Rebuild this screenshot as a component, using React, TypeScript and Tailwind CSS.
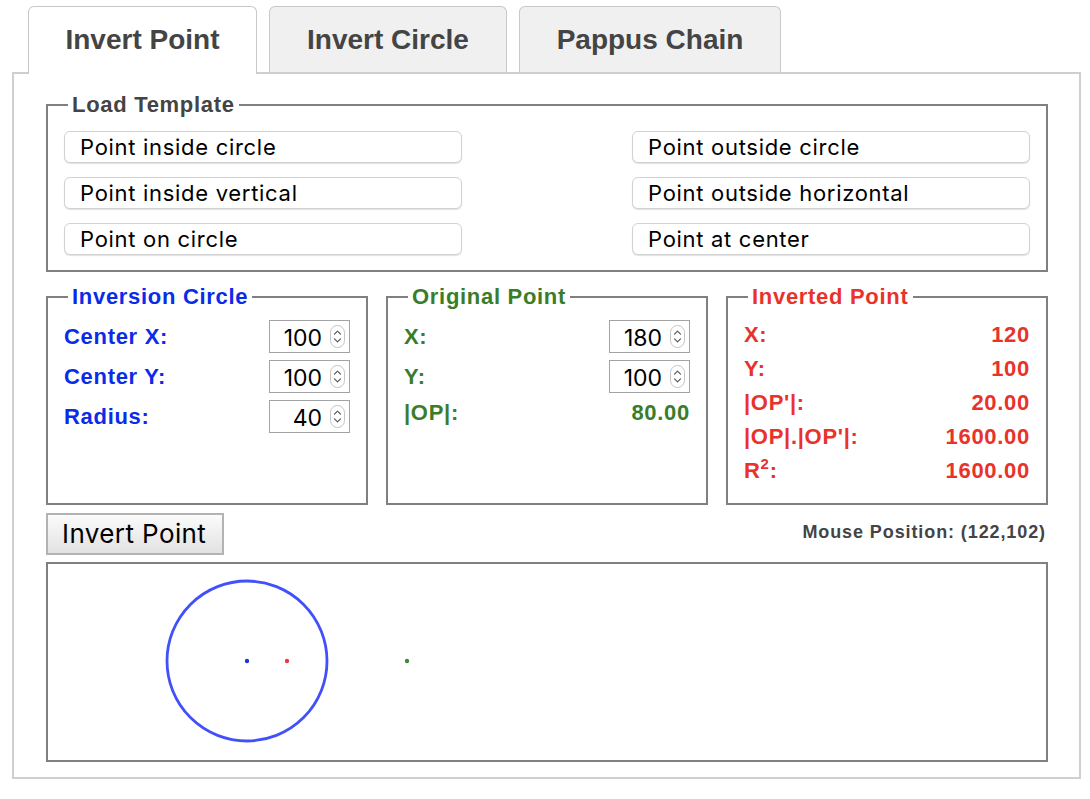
import React from "react";

const Spinner = () => (
  <svg width="15" height="23" viewBox="0 0 15 23" className="shrink-0">
    <rect x="0.5" y="0.5" width="14" height="22" rx="7" fill="#ffffff" stroke="#c4c4c4" />
    <path d="M4.5 9.2 L7.5 6.2 L10.5 9.2" stroke="#5a5a5a" strokeWidth="1.2" fill="none" strokeLinecap="round" strokeLinejoin="round" />
    <path d="M4.5 13.8 L7.5 16.8 L10.5 13.8" stroke="#5a5a5a" strokeWidth="1.2" fill="none" strokeLinecap="round" strokeLinejoin="round" />
  </svg>
);

const NumInput = ({ value }: { value: string }) => (
  <div className="w-[81px] h-[33px] border border-[#a3a3a3] bg-white flex items-center justify-end gap-[8px] pr-[4px] font-['Inter',sans-serif] font-normal tracking-normal text-[23px] text-black leading-none">
    <span className="pt-[3px]">{value}</span>
    <Spinner />
  </div>
);

const TemplateBtn = ({ label }: { label: string }) => (
  <button className="h-[32px] w-[398px] border border-[#d2d2d2] rounded-[6px] bg-white text-left pl-[15px] font-['Inter',sans-serif] text-[22px] tracking-[0.7px] text-black leading-none shadow-[0_1px_1px_rgba(0,0,0,0.12)]">
    {label}
  </button>
);

export default function App() {
  return (
    <div className="w-[1090px] h-[799px] bg-white pt-[6px] pl-[12px] font-['Liberation_Sans',Arial,sans-serif]">
      <div className="w-[1069px]">
        {/* Tabs */}
        <div className="flex items-start gap-[12px] pl-[16px] -mb-[2px] relative z-10">
          <div className="w-[229px] h-[68px] bg-white border border-b-0 border-[#c8c8c8] rounded-t-[6px] flex items-center justify-center pb-[2px] text-[28px] font-bold text-[#444444]">
            Invert Point
          </div>
          <div className="w-[238px] h-[66px] bg-[#f0f0f0] border border-b-0 border-[#c8c8c8] rounded-t-[6px] flex items-center justify-center pt-[1px] text-[28px] font-bold text-[#444444]">
            Invert Circle
          </div>
          <div className="w-[262px] h-[66px] bg-[#f0f0f0] border border-b-0 border-[#c8c8c8] rounded-t-[6px] flex items-center justify-center pt-[1px] text-[28px] font-bold text-[#444444]">
            Pappus Chain
          </div>
        </div>

        {/* Panel */}
        <div className="h-[707px] border-2 border-[#cfcfcf] pl-[32px] pt-[18px]">
          <div className="w-[1002px] flex flex-col">
            {/* Load Template */}
            <fieldset className="h-[180px] border-2 border-[#808080]">
              <legend className="ml-[20px] px-[4px] leading-[25px] text-[22px] font-bold tracking-[0.7px] text-[#444444]">
                Load Template
              </legend>
              <div className="grid grid-cols-[398px_398px] justify-between gap-y-[14px] px-[16px] pt-[14px]">
                <TemplateBtn label="Point inside circle" />
                <TemplateBtn label="Point outside circle" />
                <TemplateBtn label="Point inside vertical" />
                <TemplateBtn label="Point outside horizontal" />
                <TemplateBtn label="Point on circle" />
                <TemplateBtn label="Point at center" />
              </div>
            </fieldset>

            {/* Three boxes */}
            <div className="grid grid-cols-3 gap-[18px] mt-[12px]">
              <fieldset className="h-[221px] border-2 border-[#808080] text-[#0a2be8]">
                <legend className="ml-[20px] px-[4px] leading-[25px] text-[22px] font-bold tracking-[0.7px]">
                  Inversion Circle
                </legend>
                <div className="flex flex-col gap-[7px] px-[16px] pt-[11px] text-[22px] font-bold tracking-[0.7px] leading-[25px]">
                  <div className="flex items-center justify-between">
                    <span>Center X:</span>
                    <NumInput value="100" />
                  </div>
                  <div className="flex items-center justify-between">
                    <span>Center Y:</span>
                    <NumInput value="100" />
                  </div>
                  <div className="flex items-center justify-between">
                    <span>Radius:</span>
                    <NumInput value="40" />
                  </div>
                </div>
              </fieldset>

              <fieldset className="h-[221px] border-2 border-[#808080] text-[#3a7d28]">
                <legend className="ml-[20px] px-[4px] leading-[25px] text-[22px] font-bold tracking-[0.7px]">
                  Original Point
                </legend>
                <div className="flex flex-col gap-[7px] px-[16px] pt-[11px] text-[22px] font-bold tracking-[0.7px] leading-[25px]">
                  <div className="flex items-center justify-between">
                    <span>X:</span>
                    <NumInput value="180" />
                  </div>
                  <div className="flex items-center justify-between">
                    <span>Y:</span>
                    <NumInput value="100" />
                  </div>
                  <div className="flex items-center justify-between">
                    <span>|OP|:</span>
                    <span>80.00</span>
                  </div>
                </div>
              </fieldset>

              <fieldset className="h-[221px] border-2 border-[#808080] text-[#e8322a]">
                <legend className="ml-[20px] px-[4px] leading-[25px] text-[22px] font-bold tracking-[0.7px]">
                  Inverted Point
                </legend>
                <div className="flex flex-col px-[16px] pt-[9px] text-[22px] font-bold tracking-[0.7px] leading-[34px]">
                  <div className="flex justify-between">
                    <span>X:</span>
                    <span>120</span>
                  </div>
                  <div className="flex justify-between">
                    <span>Y:</span>
                    <span>100</span>
                  </div>
                  <div className="flex justify-between">
                    <span>|OP'|:</span>
                    <span>20.00</span>
                  </div>
                  <div className="flex justify-between">
                    <span>|OP|.|OP'|:</span>
                    <span>1600.00</span>
                  </div>
                  <div className="flex justify-between">
                    <span>
                      R<sup className="text-[15px] relative -top-[9px] align-baseline">2</sup>:
                    </span>
                    <span>1600.00</span>
                  </div>
                </div>
              </fieldset>
            </div>

            {/* Button row */}
            <div className="flex items-center justify-between mt-[8px]">
              <button className="w-[178px] h-[42px] border-2 border-[#b3b3b3] bg-gradient-to-b from-[#fbfbfb] to-[#e2e2e2] text-left pl-[14px] font-['Inter',sans-serif] text-[26px] tracking-[0.4px] text-black leading-none">
                Invert Point
              </button>
              <span className="pr-[2px] pb-[4px] text-[18px] font-bold tracking-[0.9px] text-[#444444]">
                Mouse Position: (122,102)
              </span>
            </div>

            {/* Canvas */}
            <div className="mt-[7px] h-[200px] border-2 border-[#808080] bg-white">
              <svg width="998" height="196" viewBox="0 0 998 196">
                <circle cx="199" cy="97" r="80" fill="none" stroke="#4150fa" strokeWidth="2.8" />
                <circle cx="199" cy="97" r="2.2" fill="#2233ee" />
                <circle cx="239" cy="97" r="2.2" fill="#f03a3a" />
                <circle cx="359" cy="97" r="2.2" fill="#3d8a3d" />
              </svg>
            </div>
          </div>
        </div>
      </div>
    </div>
  );
}
